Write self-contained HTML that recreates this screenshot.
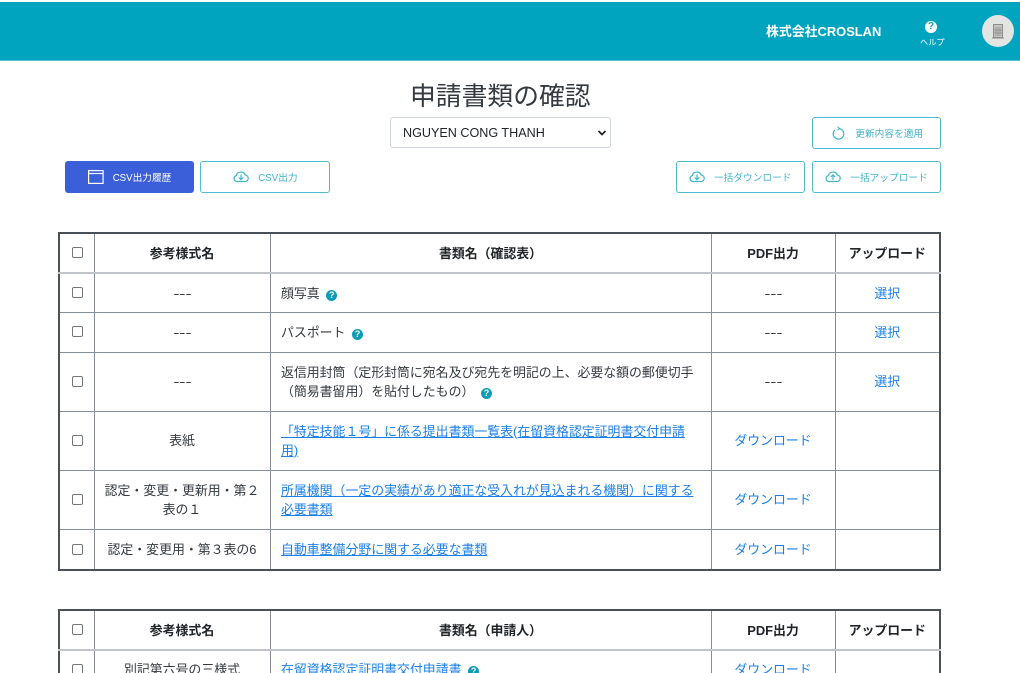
<!DOCTYPE html>
<html lang="ja"><head><meta charset="utf-8"><style>
html,body{margin:0;padding:0;background:#fff;width:1020px;height:673px;overflow:hidden}
#w{width:1020px;height:673px;overflow:hidden;position:relative;font-family:"Liberation Sans","Noto Sans CJK JP",sans-serif;color:#212529}
.hd{position:absolute;left:0;top:2px;width:1020px;height:58px;background:#00a4bf;border-bottom:1px solid #5cc3d5}
.a{position:absolute;white-space:nowrap}
.btn{position:absolute;box-sizing:border-box;height:32px;border:1px solid #4fbdd0;border-radius:3px;background:#fff;color:#3fb4ca;font-size:9.7px;line-height:33px;white-space:nowrap}
.btn span{position:absolute;top:0}
.btn svg{position:absolute;fill:none;stroke:currentColor;stroke-width:1.2}
table{position:absolute;left:58px;width:883px;border-collapse:collapse;table-layout:fixed;border:2px solid #495057;font-size:12.9px;line-height:19.5px;color:#343a40}
td,th{border:1px solid #868e96;padding:1px 8px 0;text-align:center;box-sizing:border-box}
th{font-weight:700;border-bottom:2px solid #c1c5c9;color:#212529}
td.l{text-align:left;padding-left:10.5px;padding-right:4px;white-space:nowrap}
td.c,th.c{padding:1px 0 0}
td.k,th.k{padding:0 0 2px 1px}
a{color:#1a7fe8;text-decoration:none}
a.u{text-decoration:underline}
.d{display:inline-block;transform:scaleX(1.4)}
.cb{display:inline-block;box-sizing:border-box;width:11px;height:11px;border:1px solid #767676;border-radius:2px;background:#fff;vertical-align:middle}
.q{display:inline-block;width:11px;height:11px;border-radius:50%;background:#0d9cb8;color:#fff;font-size:9px;line-height:11px;font-weight:700;text-align:center;vertical-align:0;margin-left:3px;font-family:"Liberation Sans",sans-serif}
</style></head><body><div id="w">
<div class="hd"></div>
<div class="a" style="left:766px;top:23px;font-size:12.9px;line-height:18px;font-weight:700;color:#fff">株式会社CROSLAN</div>
<div class="a" style="left:925px;top:21px;width:12px;height:12px;border-radius:50%;background:#fff;color:#00a4bf;font-size:10px;font-weight:700;line-height:12px;text-align:center">?</div>
<div class="a" style="left:920px;top:36px;font-size:8.2px;line-height:13px;color:#fff">ヘルプ</div>
<div class="a" style="left:982px;top:15px;width:32px;height:32px;border-radius:50%;background:#e4e4e2"></div>
<svg class="a" style="left:991px;top:23px" width="14" height="16" viewBox="0 0 14 16"><rect x="2.500" y="1.500" width="9" height="13" fill="#c4c4c2" stroke="#8d8d8b"/><path d="M5 4v9M7 4v9M9 4v9M3 7h8M3 10h8" stroke="#8d8d8b" stroke-width=".8"/><path d="M1 15h12" stroke="#8d8d8b"/></svg>

<div class="a" style="left:410px;top:79px;font-size:25.8px;line-height:36px;color:#343a40">申請書類の確認</div>
<div class="a" style="left:390px;top:117px;box-sizing:border-box;width:221px;height:31px;border:1px solid #ced4da;border-radius:3px;font-size:12.600px;line-height:30px;padding-left:12px;color:#212529">NGUYEN CONG THANH
<svg style="position:absolute;left:206px;top:11px" width="10" height="8" viewBox="0 0 10 8"><path d="M1.500 2l3.500 3.500L8.500 2" fill="none" stroke="#212529" stroke-width="1.800"/></svg></div>

<div class="btn" style="left:812.3px;top:117px;width:129px"><svg style="left:18px;top:8px" width="15" height="15" viewBox="0 0 15 15"><path d="M7.500 2.500a5.300 5.300 0 1 1-3.600 1.400"/><path d="M6.500.6l2 1.900-2 1.900" stroke-width="1"/></svg><span style="left:42px">更新内容を適用</span></div>
<div class="btn" style="left:64.7px;top:161px;width:129.3px;background:#3a5fd9;border-color:#3a5fd9;color:#fff"><svg style="left:22px;top:8px" width="16" height="14" viewBox="0 0 16 14"><rect x=".6" y=".6" width="14.500" height="12.800"/><path d="M.6 3.500h14.500"/></svg><span style="left:47px">CSV出力履歴</span></div>
<div class="btn" style="left:200.3px;top:161px;width:129.400px"><svg style="left:32px;top:8px" width="16" height="13" viewBox="0 0 16 13"><path d="M4 11.500H3.500a3 3 0 0 1-.3-5.800A4.800 4.800 0 0 1 12.300 5a3.300 3.300 0 0 1 .3 6.500H12z"/><path d="M8 4.500v5M5.800 7.500L8 9.700l2.200-2.200"/></svg><span style="left:57px">CSV出力</span></div>
<div class="btn" style="left:676px;top:161px;width:129.400px"><svg style="left:12px;top:8px" width="16" height="13" viewBox="0 0 16 13"><path d="M4 11.500H3.500a3 3 0 0 1-.3-5.800A4.800 4.800 0 0 1 12.300 5a3.300 3.300 0 0 1 .3 6.500H12z"/><path d="M8 4.500v5M5.800 7.500L8 9.700l2.200-2.200"/></svg><span style="left:37px">一括ダウンロード</span></div>
<div class="btn" style="left:812.3px;top:161px;width:129px"><svg style="left:12px;top:8px" width="16" height="13" viewBox="0 0 16 13"><path d="M4 11.500H3.500a3 3 0 0 1-.3-5.800A4.800 4.800 0 0 1 12.300 5a3.300 3.300 0 0 1 .3 6.500H12z"/><path d="M8 10V5M5.800 7L8 4.800 10.200 7"/></svg><span style="left:37px">一括アップロード</span></div>

<table style="top:232px">
<colgroup><col style="width:35px"><col style="width:176px"><col style="width:441px"><col style="width:124px"><col style="width:105px"></colgroup>
<tr style="height:40px"><th class="k"><span class="cb"></span></th><th>参考様式名</th><th>書類名（確認表）</th><th>PDF出力</th><th class="c">アップロード</th></tr>
<tr style="height:39px"><td class="k"><span class="cb"></span></td><td><span class="d">---</span></td><td class="l">顔写真 <span class="q">?</span></td><td><span class="d">---</span></td><td><a>選択</a></td></tr>
<tr style="height:40px"><td class="k"><span class="cb"></span></td><td><span class="d">---</span></td><td class="l">パスポート <span class="q">?</span></td><td><span class="d">---</span></td><td><a>選択</a></td></tr>
<tr style="height:59px"><td class="k"><span class="cb"></span></td><td><span class="d">---</span></td><td class="l">返信用封筒（定形封筒に宛名及び宛先を明記の上、必要な額の郵便切手<br>（簡易書留用）を貼付したもの） <span class="q">?</span></td><td><span class="d">---</span></td><td><a>選択</a></td></tr>
<tr style="height:59px"><td class="k"><span class="cb"></span></td><td>表紙</td><td class="l"><a class="u">「特定技能１号」に係る提出書類一覧表(在留資格認定証明書交付申請<br>用)</a></td><td class="c"><a>ダウンロード</a></td><td></td></tr>
<tr style="height:59px"><td class="k"><span class="cb"></span></td><td style="white-space:nowrap">認定・変更・更新用・第２<br>表の１</td><td class="l"><a class="u">所属機関（一定の実績があり適正な受入れが見込まれる機関）に関する<br>必要書類</a></td><td class="c"><a>ダウンロード</a></td><td></td></tr>
<tr style="height:41px"><td class="k"><span class="cb"></span></td><td style="white-space:nowrap">認定・変更用・第３表の6</td><td class="l"><a class="u">自動車整備分野に関する必要な書類</a></td><td class="c"><a>ダウンロード</a></td><td></td></tr>
</table>

<table style="top:609px">
<colgroup><col style="width:35px"><col style="width:176px"><col style="width:441px"><col style="width:124px"><col style="width:105px"></colgroup>
<tr style="height:40px"><th class="k"><span class="cb"></span></th><th>参考様式名</th><th>書類名（申請人）</th><th>PDF出力</th><th class="c">アップロード</th></tr>
<tr style="height:39px"><td class="k"><span class="cb"></span></td><td>別記第六号の三様式</td><td class="l"><a class="u">在留資格認定証明書交付申請書</a> <span class="q">?</span></td><td class="c"><a>ダウンロード</a></td><td></td></tr>
</table>
</div></body></html>
